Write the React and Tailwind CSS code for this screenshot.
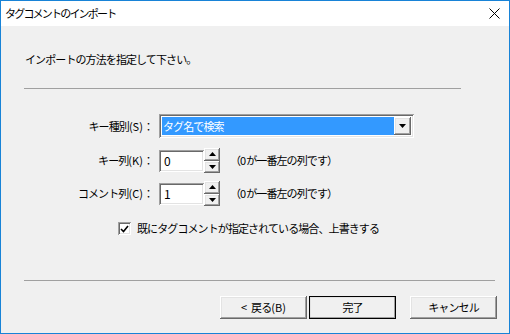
const sunken =
  "shadow-[inset_1px_1px_0_#a0a0a0,inset_-1px_-1px_0_#ffffff,inset_2px_2px_0_#696969,inset_-2px_-2px_0_#e3e3e3]";
const raised =
  "shadow-[inset_-1px_-1px_0_#696969,inset_1px_1px_0_#ffffff,inset_-2px_-2px_0_#a0a0a0,inset_2px_2px_0_#e3e3e3]";

function Arrow({ up }) {
  return (
    <svg width="7" height="4" viewBox="0 0 7 4">
      <path d={up ? "M3.5 0 L7 4 L0 4 Z" : "M0 0 L7 0 L3.5 4 Z"} fill="#000" />
    </svg>
  );
}

// latin bits keep normal spacing, kana/kanji are tightened
function L({ children }) {
  return <span className="tracking-normal">{children}</span>;
}

function Spin({ value }) {
  return (
    <div className="flex items-center">
      <div className={`w-[45px] h-[22px] bg-white ${sunken} pl-[5px] flex items-center text-[12px]`}>
        {value}
      </div>
      <div className="flex flex-col w-[16px] h-[25px]">
        <div className={`flex-1 bg-[#f0f0f0] ${raised} flex items-center justify-center`}>
          <Arrow up />
        </div>
        <div className={`flex-1 bg-[#f0f0f0] ${raised} flex items-center justify-center`}>
          <Arrow />
        </div>
      </div>
    </div>
  );
}

function Button({ children, primary }) {
  return (
    <div
      className={`w-[87px] h-[23px] flex items-center justify-center bg-[#f0f0f0] ${
        primary ? "outline outline-1 outline-black -outline-offset-1 " : ""
      }${raised}`}
    >
      {children}
    </div>
  );
}

export default function App() {
  return (
    <div
      className="w-[510px] h-[334px] border border-[#1883d7] bg-[#f0f0f0] flex flex-col text-[11px] tracking-[-0.9px] text-black leading-none"
      style={{ fontFamily: '"Noto Sans CJK JP", "Noto Sans", sans-serif' }}
    >
      <div className="h-[25px] bg-white flex items-center justify-between pl-[4px] pr-[9px] shrink-0">
        <span className="tracking-[-1.8px]">タグコメントのインポート</span>
        <svg width="11" height="11" viewBox="0 0 11 11">
          <path d="M0.5 0.5 L10.5 10.5 M10.5 0.5 L0.5 10.5" stroke="#000" strokeWidth="1" />
        </svg>
      </div>

      <div className="pl-[24px] pt-[28px]">インポートの方法を指定して下さい。</div>
      <div className="ml-[23px] w-[437px] h-px bg-[#a0a0a0] mt-[23px]" />

      <div className="flex flex-col mt-[25px]">
        <div className="flex items-center">
          <div className="w-[153px] text-right pr-[1px]">
            キー種別<L>(S)</L>：
          </div>
          <div className={`ml-[5px] w-[255px] h-[24px] bg-white ${sunken} flex items-center p-[3px]`}>
            <div className="flex-1 h-full bg-[#3399ff] text-white flex items-center pl-[1px]">
              タグ名で検索
            </div>
            <div className={`w-[17px] h-full bg-[#f0f0f0] ${raised} flex items-center justify-center`}>
              <Arrow />
            </div>
          </div>
        </div>

        <div className="flex items-center mt-[10px]">
          <div className="w-[153px] text-right pr-[1px]">
            キー列<L>(K)</L>：
          </div>
          <div className="ml-[5px]">
            <Spin value="0" />
          </div>
          <div className="ml-[10px]">
            （<L>0</L>が一番左の列です）
          </div>
        </div>

        <div className="flex items-center mt-[8px]">
          <div className="w-[153px] text-right pr-[1px]">
            コメント列<L>(C)</L>：
          </div>
          <div className="ml-[5px]">
            <Spin value="1" />
          </div>
          <div className="ml-[10px]">
            （<L>0</L>が一番左の列です）
          </div>
        </div>

        <div className="flex items-center mt-[16px] ml-[117px]">
          <div className={`w-[13px] h-[13px] bg-white ${sunken} flex items-center justify-center`}>
            <svg width="9" height="8" viewBox="0 0 9 8">
              <path d="M1 4 L3.5 6.5 L8 1" stroke="#000" strokeWidth="1.6" fill="none" />
            </svg>
          </div>
          <div className="ml-[6px]">既にタグコメントが指定されている場合、上書きする</div>
        </div>
      </div>

      <div className="ml-[23px] w-[471px] h-px bg-[#a0a0a0] mt-[45px]" />

      <div className="flex justify-end gap-[2px] pr-[12px] mt-[15px]">
        <Button>
          <span className="tracking-normal mr-[4px]">&lt;</span>戻る<L>(B)</L>
        </Button>
        <Button primary>完了</Button>
        <div className="w-[10px]" />
        <Button>キャンセル</Button>
      </div>
    </div>
  );
}
